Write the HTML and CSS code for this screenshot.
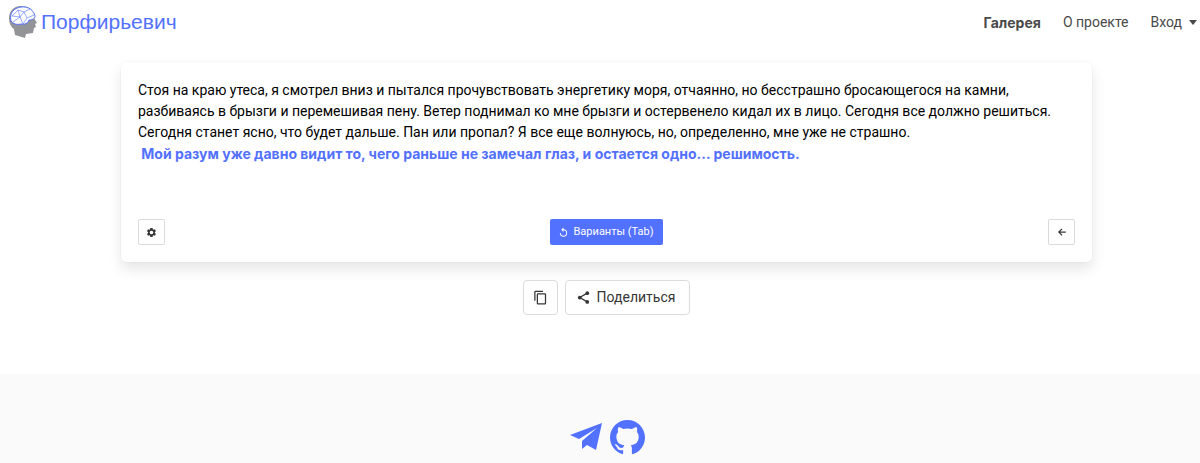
FILE: index.html
```html
<!DOCTYPE html>
<html lang="ru">
<head>
<meta charset="UTF-8">
<title>Порфирьевич</title>
<link rel="stylesheet" href="styles.css">
</head>
<body>
<header class="header">
	<a class="logo" href="#">
		<svg class="logo-img" viewBox="0 0 30 34">
			<path fill="#929497" d="M13 1C5 1 1 7 1 13c0 5 2 9 5 11l1 6 10 3 1-4 7-1 1-5 2-1-1-3 2-1-3-5c1-8-5-12-13-12z"/>
			<path fill="#fff" stroke="#5371ff" d="M3 16C1 8 6 3 13 2c8-1 13 4 14 9 0 3-3 4-6 4-1 3-4 5-8 4-4 1-8 0-10-3z"/>
			<path fill="none" stroke="#5371ff" stroke-width=".6" d="M4 11l6-6 6 2 6-3M4 11l8 1 4-5 3 6 7-3M12 12l-2-7M12 12l-7 5M12 12l3 7 4-6"/>
		</svg>
		<span>Порфирьевич</span>
	</a>
	<nav class="nav">
		<a class="active" href="#">Галерея</a>
		<a href="#">О проекте</a>
		<a class="login" href="#">Вход <i class="caret"></i></a>
	</nav>
</header>
<main class="main">
	<section class="card">
		<div class="text">
			<p>Стоя на краю утеса, я смотрел вниз и пытался прочувствовать энергетику моря, отчаянно, но бесстрашно бросающегося на камни, разбиваясь в брызги и перемешивая пену. Ветер поднимал ко мне брызги и остервенело кидал их в лицо. Сегодня все должно решиться. Сегодня станет ясно, что будет дальше. Пан или пропал? Я все еще волнуюсь, но, определенно, мне уже не страшно.</p>
			<p class="reply">&nbsp;Мой разум уже давно видит то, чего раньше не замечал глаз, и остается одно... решимость.</p>
		</div>
		<div class="tools">
			<button class="btn small" type="button" aria-label="Настройки">
				<svg width="11" height="11" viewBox="0 0 24 24"><path fill="currentColor" d="M19.4 13a7.500 7.500 0 0 0 0-2l2.100-1.600a.5.5 0 0 0 .1-.6l-2-3.500a.5.5 0 0 0-.6-.2l-2.500 1a7.300 7.300 0 0 0-1.700-1l-.4-2.700a.5.5 0 0 0-.5-.4h-4a.5.5 0 0 0-.5.4L9 5.100a7.300 7.300 0 0 0-1.700 1l-2.500-1a.5.5 0 0 0-.6.2l-2 3.500a.5.5 0 0 0 .1.600L4.500 11a7.500 7.500 0 0 0 0 2l-2.200 1.600a.5.5 0 0 0-.1.600l2 3.500c.1.200.4.300.6.200l2.500-1a7.300 7.300 0 0 0 1.700 1l.4 2.700c0 .2.200.4.500.4h4c.3 0 .5-.2.500-.4l.4-2.700a7.300 7.300 0 0 0 1.700-1l2.500 1c.2.100.5 0 .6-.2l2-3.500a.5.5 0 0 0-.1-.6zM12 16a4 4 0 1 1 0-8 4 4 0 0 1 0 8z"/></svg>
			</button>
			<button class="btn primary" type="button">
				<svg width="11" height="11" viewBox="0 0 24 24"><path fill="currentColor" d="M12 5V1L7 6l5 5V7a6 6 0 1 1-6 6H4a8 8 0 1 0 8-8z"/></svg>
				<span>Варианты (Tab)</span>
			</button>
			<button class="btn small" type="button" aria-label="Назад">
				<svg width="10" height="10" viewBox="0 0 24 24"><path fill="currentColor" d="M21 10.500H7.800L13 5.400 11 3.300 2.300 12l8.700 8.700 2-2.100-5.200-5.100H21z"/></svg>
			</button>
		</div>
	</section>
	<div class="share">
		<button class="btn copy" type="button" aria-label="Копировать">
			<svg width="15" height="15" viewBox="0 0 24 24"><path fill="currentColor" d="M16 1H4a2 2 0 0 0-2 2v14h2V3h12zm3 4H8a2 2 0 0 0-2 2v14c0 1.100.9 2 2 2h11a2 2 0 0 0 2-2V7a2 2 0 0 0-2-2zm0 16H8V7h11z"/></svg>
		</button>
		<button class="btn big" type="button">
			<svg width="15" height="15" viewBox="0 0 24 24"><path fill="none" stroke="currentColor" stroke-width="2" d="M18 5L6 12l12 7"/><g fill="currentColor"><circle cx="18" cy="5" r="3"/><circle cx="6" cy="12" r="3"/><circle cx="18" cy="19" r="3"/></g></svg>
			<span>Поделиться</span>
		</button>
	</div>
</main>
<footer class="footer">
	<a href="#" aria-label="Telegram">
		<svg width="34" height="30" viewBox="0 0 34 30"><path fill="#5371ff" d="M33 1L1 13l9 4L28 6 13 19v8l5-4 9 5z"/></svg>
	</a>
	<a href="#" aria-label="GitHub">
		<svg width="35" height="35" viewBox="0 0 16 16"><path fill="#5371ff" d="M8 0C3.580 0 0 3.580 0 8c0 3.540 2.290 6.530 5.470 7.590.4.070.55-.17.55-.38 0-.19-.01-.82-.01-1.490-2.010.37-2.530-.49-2.690-.94-.09-.23-.48-.94-.82-1.130-.28-.15-.68-.52-.01-.53.63-.01 1.080.58 1.230.82.72 1.210 1.870.87 2.330.66.07-.52.28-.87.51-1.070-1.780-.2-3.640-.89-3.640-3.950 0-.87.31-1.590.82-2.150-.08-.2-.36-1.020.08-2.120 0 0 .67-.21 2.200.82.64-.18 1.320-.27 2-.27s1.360.09 2 .27c1.530-1.040 2.200-.82 2.200-.82.44 1.100.16 1.920.08 2.120.51.56.82 1.270.82 2.150 0 3.070-1.870 3.750-3.650 3.950.29.25.54.73.54 1.480 0 1.070-.01 1.930-.01 2.200 0 .21.15.46.55.38A8.010 8.010 0 0 0 16 8c0-4.420-3.580-8-8-8z"/></svg>
	</a>
</footer>
</body>
</html>
```
FILE: styles.css
```css
* {margin:0; padding:0; box-sizing:border-box;}
body {min-height:100vh; display:flex; flex-direction:column; font:14px/21px Roboto, "Liberation Sans", sans-serif; color:#000; background:#fff;}
a {color:inherit; text-decoration:none;}
svg {display:block; flex:none;}

.header {height:44px; padding:0 3px 0 8px; display:flex; align-items:center; justify-content:space-between;}
.logo {display:flex; align-items:center; gap:3px; color:#5371ff; font:21px/26px "Liberation Sans", Arial, sans-serif;}
.logo-img {width:30px; height:34px;}
.nav {display:flex; align-items:center; gap:22px; color:#4a4a4a;}
.nav .active {font-family:Inter, sans-serif; font-weight:bold;}
.login {display:flex; align-items:center; gap:7px;}
.caret {border:4px solid transparent; border-top:5px solid #4a4a4a; border-bottom:0;}

.main {padding:18px 108px 59px 121px;}
.card {padding:18px 17px 17px; border-radius:6px; box-shadow:0 7px 14px rgba(10,10,10,.1), 0 0 0 1px rgba(10,10,10,.02);}
.text {min-height:139px;}
.reply {color:#5371ff; font-family:Inter, sans-serif; font-weight:bold;}
.tools {display:flex; justify-content:space-between;}

.btn {height:35px; display:flex; align-items:center; justify-content:center; border:1px solid #dbdbdb; border-radius:4px; background:#fff; color:#363636;}
.btn.small {width:27px; height:26px; border-radius:2px;}
.btn.primary {height:26px; padding:0 10px 0 8px; gap:5px; border:0; border-radius:2px; background:#5371ff; color:#fff; font:11px/16px Roboto, sans-serif;}
.share {margin-top:18px; display:flex; justify-content:center; gap:7px;}
.btn.copy {width:35px;}
.btn.big {padding:0 14px 0 10px; gap:6px; font:14px/21px Roboto, sans-serif;}

.footer {flex:1; padding:45px 0 8px 14px; display:flex; align-items:center; justify-content:center; gap:7px; background:#fafafa;}
```
